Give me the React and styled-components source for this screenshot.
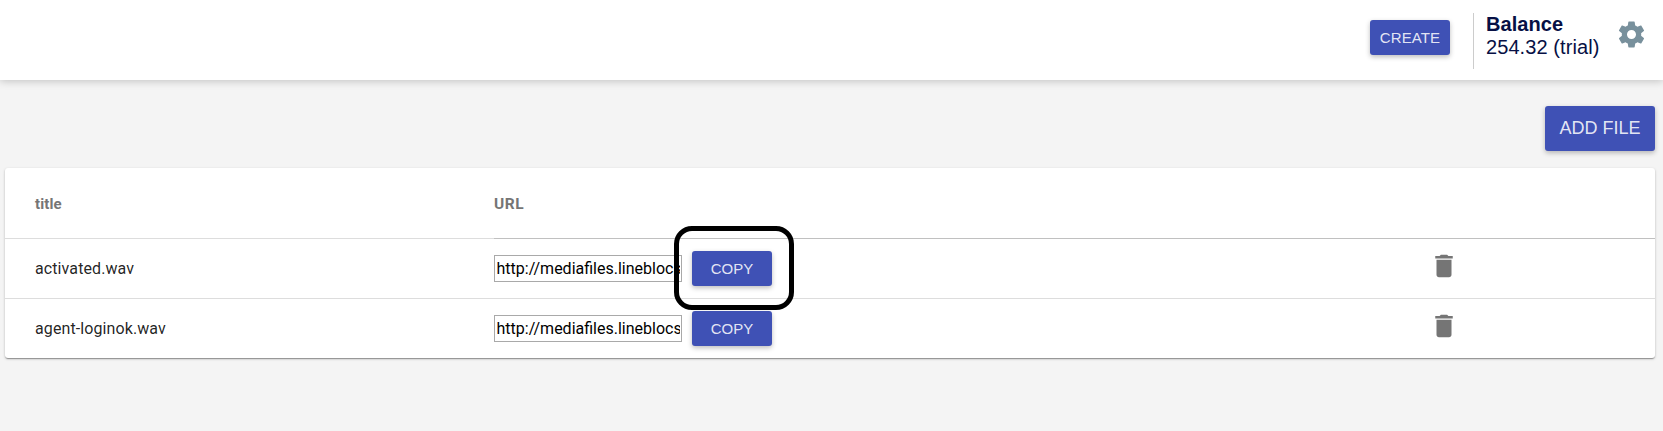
import React from "react";
import styled, { createGlobalStyle } from "styled-components";

const GlobalStyle = createGlobalStyle`
  * { box-sizing: border-box; }
  body {
    margin: 0;
    background: #f4f4f4;
    font-family: Roboto, sans-serif;
    color: rgba(0, 0, 0, 0.87);
  }
`;

const Page = styled.div`
  min-height: 431px;
  overflow: hidden;
`;

const Header = styled.header`
  display: flex;
  justify-content: flex-end;
  align-items: flex-start;
  height: 80px;
  padding-right: 16px;
  background: #fff;
  box-shadow: 0 1px 8px rgba(0, 0, 0, 0.22);
`;

const Button = styled.button`
  flex: none;
  width: ${(p) => (p.$large ? "110px" : "80px")};
  height: ${(p) => (p.$large ? "45px" : "35px")};
  padding: 0;
  border: 0;
  border-radius: 3px;
  background: #3f51b5;
  color: rgba(255, 255, 255, 0.87);
  font: ${(p) => (p.$large ? "18px" : "15px")} "Liberation Sans", Arial, sans-serif;
  text-transform: uppercase;
  box-shadow: 0 2px 5px 0 rgba(0, 0, 0, 0.26);
`;

const CreateButton = styled(Button)`
  margin-top: 20px;
  letter-spacing: 0.1px;
`;

const Balance = styled.div`
  width: 126px;
  height: 56px;
  margin: 13px 0 0 23px;
  padding-left: 12px;
  border-left: 1px solid #ccc;
  color: #071045;
  font: 20px/23px "Liberation Sans", Arial, sans-serif;
  letter-spacing: 0.08px;
  white-space: nowrap;
`;

const BalanceLabel = styled.strong`
  display: block;
`;

const GearIcon = styled.svg`
  display: block;
  width: 31px;
  height: 31px;
  margin: 18.5px 0 0 17px;
  fill: #78909c;
`;

const Actions = styled.div`
  display: flex;
  justify-content: flex-end;
  padding: 26px 8px 17px;
`;

const Card = styled.section`
  height: 190px;
  margin: 0 8px 0 5px;
  border-radius: 3px;
  background: #fff;
  box-shadow: 0 1px 3px 0 rgba(0, 0, 0, 0.2), 0 1px 1px 0 rgba(0, 0, 0, 0.18),
    0 2px 1px -1px rgba(0, 0, 0, 0.16);
`;

const Row = styled.div`
  display: grid;
  grid-template-columns: 489px 1fr 227px;
  height: 60px;
  border-top: 1px solid #ddd;
  font-size: 16px;
  letter-spacing: 0.1px;
`;

const HeadRow = styled(Row)`
  height: 70px;
  border-top: 0;
  color: #757575;
  font-size: 15px;
  font-weight: 700;
`;

const Cell = styled.div`
  display: flex;
  align-items: center;
  gap: 10px;
  padding-left: ${(p) => (p.$first ? "30px" : "0")};
`;

const HeadCell = styled(Cell)`
  padding-top: 1px;
  margin-bottom: -1px;
  border-bottom: 1px solid ${(p) => (p.$first ? "transparent" : "#c0c0c0")};
  font-size: ${(p) => (p.$first ? "15px" : "15.5px")};
  letter-spacing: ${(p) => (p.$first ? "0.1px" : "0.6px")};
  position: relative;
`;

const UrlInput = styled.input`
  width: 188px;
  height: 27px;
  padding: 1px 1px 1px 1.5px;
  border: 1px solid #a9a9a9;
  border-radius: 0;
  background: #fff;
  color: #000;
  font: 16px Roboto, sans-serif;
`;

const CopyWrap = styled.div`
  display: flex;
  position: relative;
`;

const Highlight = styled.span`
  position: absolute;
  z-index: 2;
  top: -25px;
  left: -18px;
  width: 120px;
  height: 84px;
  border: 5px solid #000;
  border-radius: 18px;
  pointer-events: none;
`;

const TrashIcon = styled.svg`
  display: block;
  width: 30px;
  height: 30px;
  margin: -5px 0 0 0.5px;
  fill: #757575;
`;

const files = [
  { title: "activated.wav", url: "http://mediafiles.lineblocs.com/activated.wav", highlighted: true },
  { title: "agent-loginok.wav", url: "http://mediafiles.lineblocs.com/agent-loginok.wav" },
];

function FileRow({ file }) {
  return (
    <Row>
      <Cell $first>{file.title}</Cell>
      <Cell>
        <UrlInput defaultValue={file.url} />
        <CopyWrap>
          <Button>Copy</Button>
          {file.highlighted && <Highlight />}
        </CopyWrap>
      </Cell>
      <Cell>
        <TrashIcon viewBox="0 0 24 24">
          <path d="M6 19c0 1.1.9 2 2 2h8c1.1 0 2-.9 2-2V7H6v12zM19 4h-3.5l-1-1h-5l-1 1H5v2h14V4z" />
        </TrashIcon>
      </Cell>
    </Row>
  );
}

export default function App() {
  return (
    <Page>
      <GlobalStyle />
      <Header>
        <CreateButton>Create</CreateButton>
        <Balance>
          <BalanceLabel>Balance</BalanceLabel>
          254.32 (trial)
        </Balance>
        <GearIcon viewBox="0 0 24 24">
          <path d="M19.43 12.98c.04-.32.07-.64.07-.98s-.03-.66-.07-.98l2.11-1.65c.19-.15.24-.42.12-.64l-2-3.46c-.12-.22-.39-.3-.61-.22l-2.49 1c-.52-.4-1.08-.73-1.69-.98l-.38-2.65C14.46 2.18 14.25 2 14 2h-4c-.25 0-.46.18-.49.42l-.38 2.65c-.61.25-1.17.59-1.69.98l-2.49-1c-.23-.09-.49 0-.61.22l-2 3.46c-.13.22-.07.49.12.64l2.11 1.65c-.04.32-.07.65-.07.98s.03.66.07.98l-2.11 1.65c-.19.15-.24.42-.12.64l2 3.46c.12.22.39.3.61.22l2.49-1c.52.4 1.08.73 1.69.98l.38 2.65c.03.24.24.42.49.42h4c.25 0 .46-.18.49-.42l.38-2.65c.61-.25 1.17-.59 1.69-.98l2.49 1c.23.09.49 0 .61-.22l2-3.46c.12-.22.07-.49-.12-.64l-2.11-1.65zM12 15.5c-1.93 0-3.5-1.57-3.5-3.5s1.57-3.5 3.5-3.5 3.5 1.57 3.5 3.5-1.57 3.5-3.5 3.5z" />
        </GearIcon>
      </Header>
      <Actions>
        <Button $large>Add File</Button>
      </Actions>
      <Card>
        <HeadRow>
          <HeadCell $first>title</HeadCell>
          <HeadCell>URL</HeadCell>
          <HeadCell />
        </HeadRow>
        {files.map((file) => (
          <FileRow key={file.title} file={file} />
        ))}
      </Card>
    </Page>
  );
}
